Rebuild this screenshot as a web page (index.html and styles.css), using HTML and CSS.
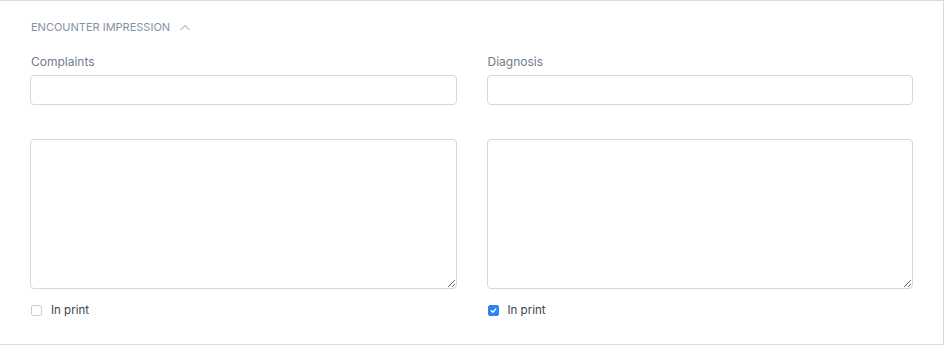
FILE: index.html
```html
<!DOCTYPE html>
<html lang="en">

<head>
    <meta charset="UTF-8">
    <meta name="viewport" content="width=device-width, initial-scale=1.0">
    <title>Encounter Impression</title>
    <link rel="stylesheet" href="styles.css">
</head>

<body>
    <div class="card">
        <div class="cardHead">
            <span class="title">ENCOUNTER IMPRESSION</span>
            <svg class="chevron" width="12" height="8" viewBox="0 0 12 8">
                <path d="M2 6.5 L6 2.5 L10 6.5" fill="none" stroke="#c3cbd4" stroke-width="1.6" stroke-linecap="round" stroke-linejoin="round" />
            </svg>
        </div>

        <div class="grid">
            <div class="col">
                <label class="label" for="complaints">Complaints</label>
                <input type="text" id="complaints" class="field">
                <textarea class="area"></textarea>
                <label class="check">
                    <input type="checkbox">
                    <span>In print</span>
                </label>
            </div>
            <div class="col">
                <label class="label" for="diagnosis">Diagnosis</label>
                <input type="text" id="diagnosis" class="field">
                <textarea class="area"></textarea>
                <label class="check">
                    <input type="checkbox" checked>
                    <span>In print</span>
                </label>
            </div>
        </div>
    </div>
</body>

</html>
```

FILE: styles.css
```css
body {
    margin: 0;
    background-color: #fff;
    font-family: Inter, "Noto Sans", sans-serif;
    color: #333;
}

.card {
    width: 944px;
    height: 345px;
    box-sizing: border-box;
    border-top: 1px solid #d6dce3;
    border-right: 1px solid #d6dce3;
    border-bottom: 1px solid #d6dce3;
    padding: 0 30px 0 30px;
}

.cardHead {
    display: flex;
    align-items: center;
    gap: 9px;
    height: 52px;
    padding-left: 1px;
}

.title {
    font-size: 11px;
    letter-spacing: 0;
    color: #8591a2;
}

.chevron {
    display: block;
}

.grid {
    display: grid;
    grid-template-columns: 1fr 1fr;
    gap: 30px;
}

.col {
    display: flex;
    flex-direction: column;
}

.label {
    font-size: 12px;
    color: #6f7c8c;
    line-height: 18px;
    margin-bottom: 4px;
    padding-left: 1px;
}

.field {
    height: 30px;
    box-sizing: border-box;
    border: 1px solid #d3d9e0;
    border-radius: 4px;
    margin: 0;
    outline: none;
}

.area {
    height: 150px;
    box-sizing: border-box;
    border: 1px solid #d3d9e0;
    border-radius: 4px;
    margin: 34px 0 0 0;
    outline: none;
    resize: vertical;
}

.check {
    display: flex;
    align-items: center;
    gap: 9px;
    margin-top: 14px;
    padding-left: 1px;
    font-size: 11.5px;
    color: #3a4450;
}

.check input {
    appearance: none;
    width: 11px;
    height: 11px;
    margin: 0;
    border: 1px solid #c9d0d8;
    border-radius: 2px;
    background-color: #fff;
}

.check input:checked {
    border-color: #2d84f5;
    background-color: #2d84f5;
    background-image: url("data:image/svg+xml;utf8,<svg xmlns='http://www.w3.org/2000/svg' viewBox='0 0 12 12'><path d='M3 6.2 L5.2 8.3 L9 4' fill='none' stroke='white' stroke-width='1.8' stroke-linecap='round' stroke-linejoin='round'/></svg>");
    background-size: 100% 100%;
}
```
